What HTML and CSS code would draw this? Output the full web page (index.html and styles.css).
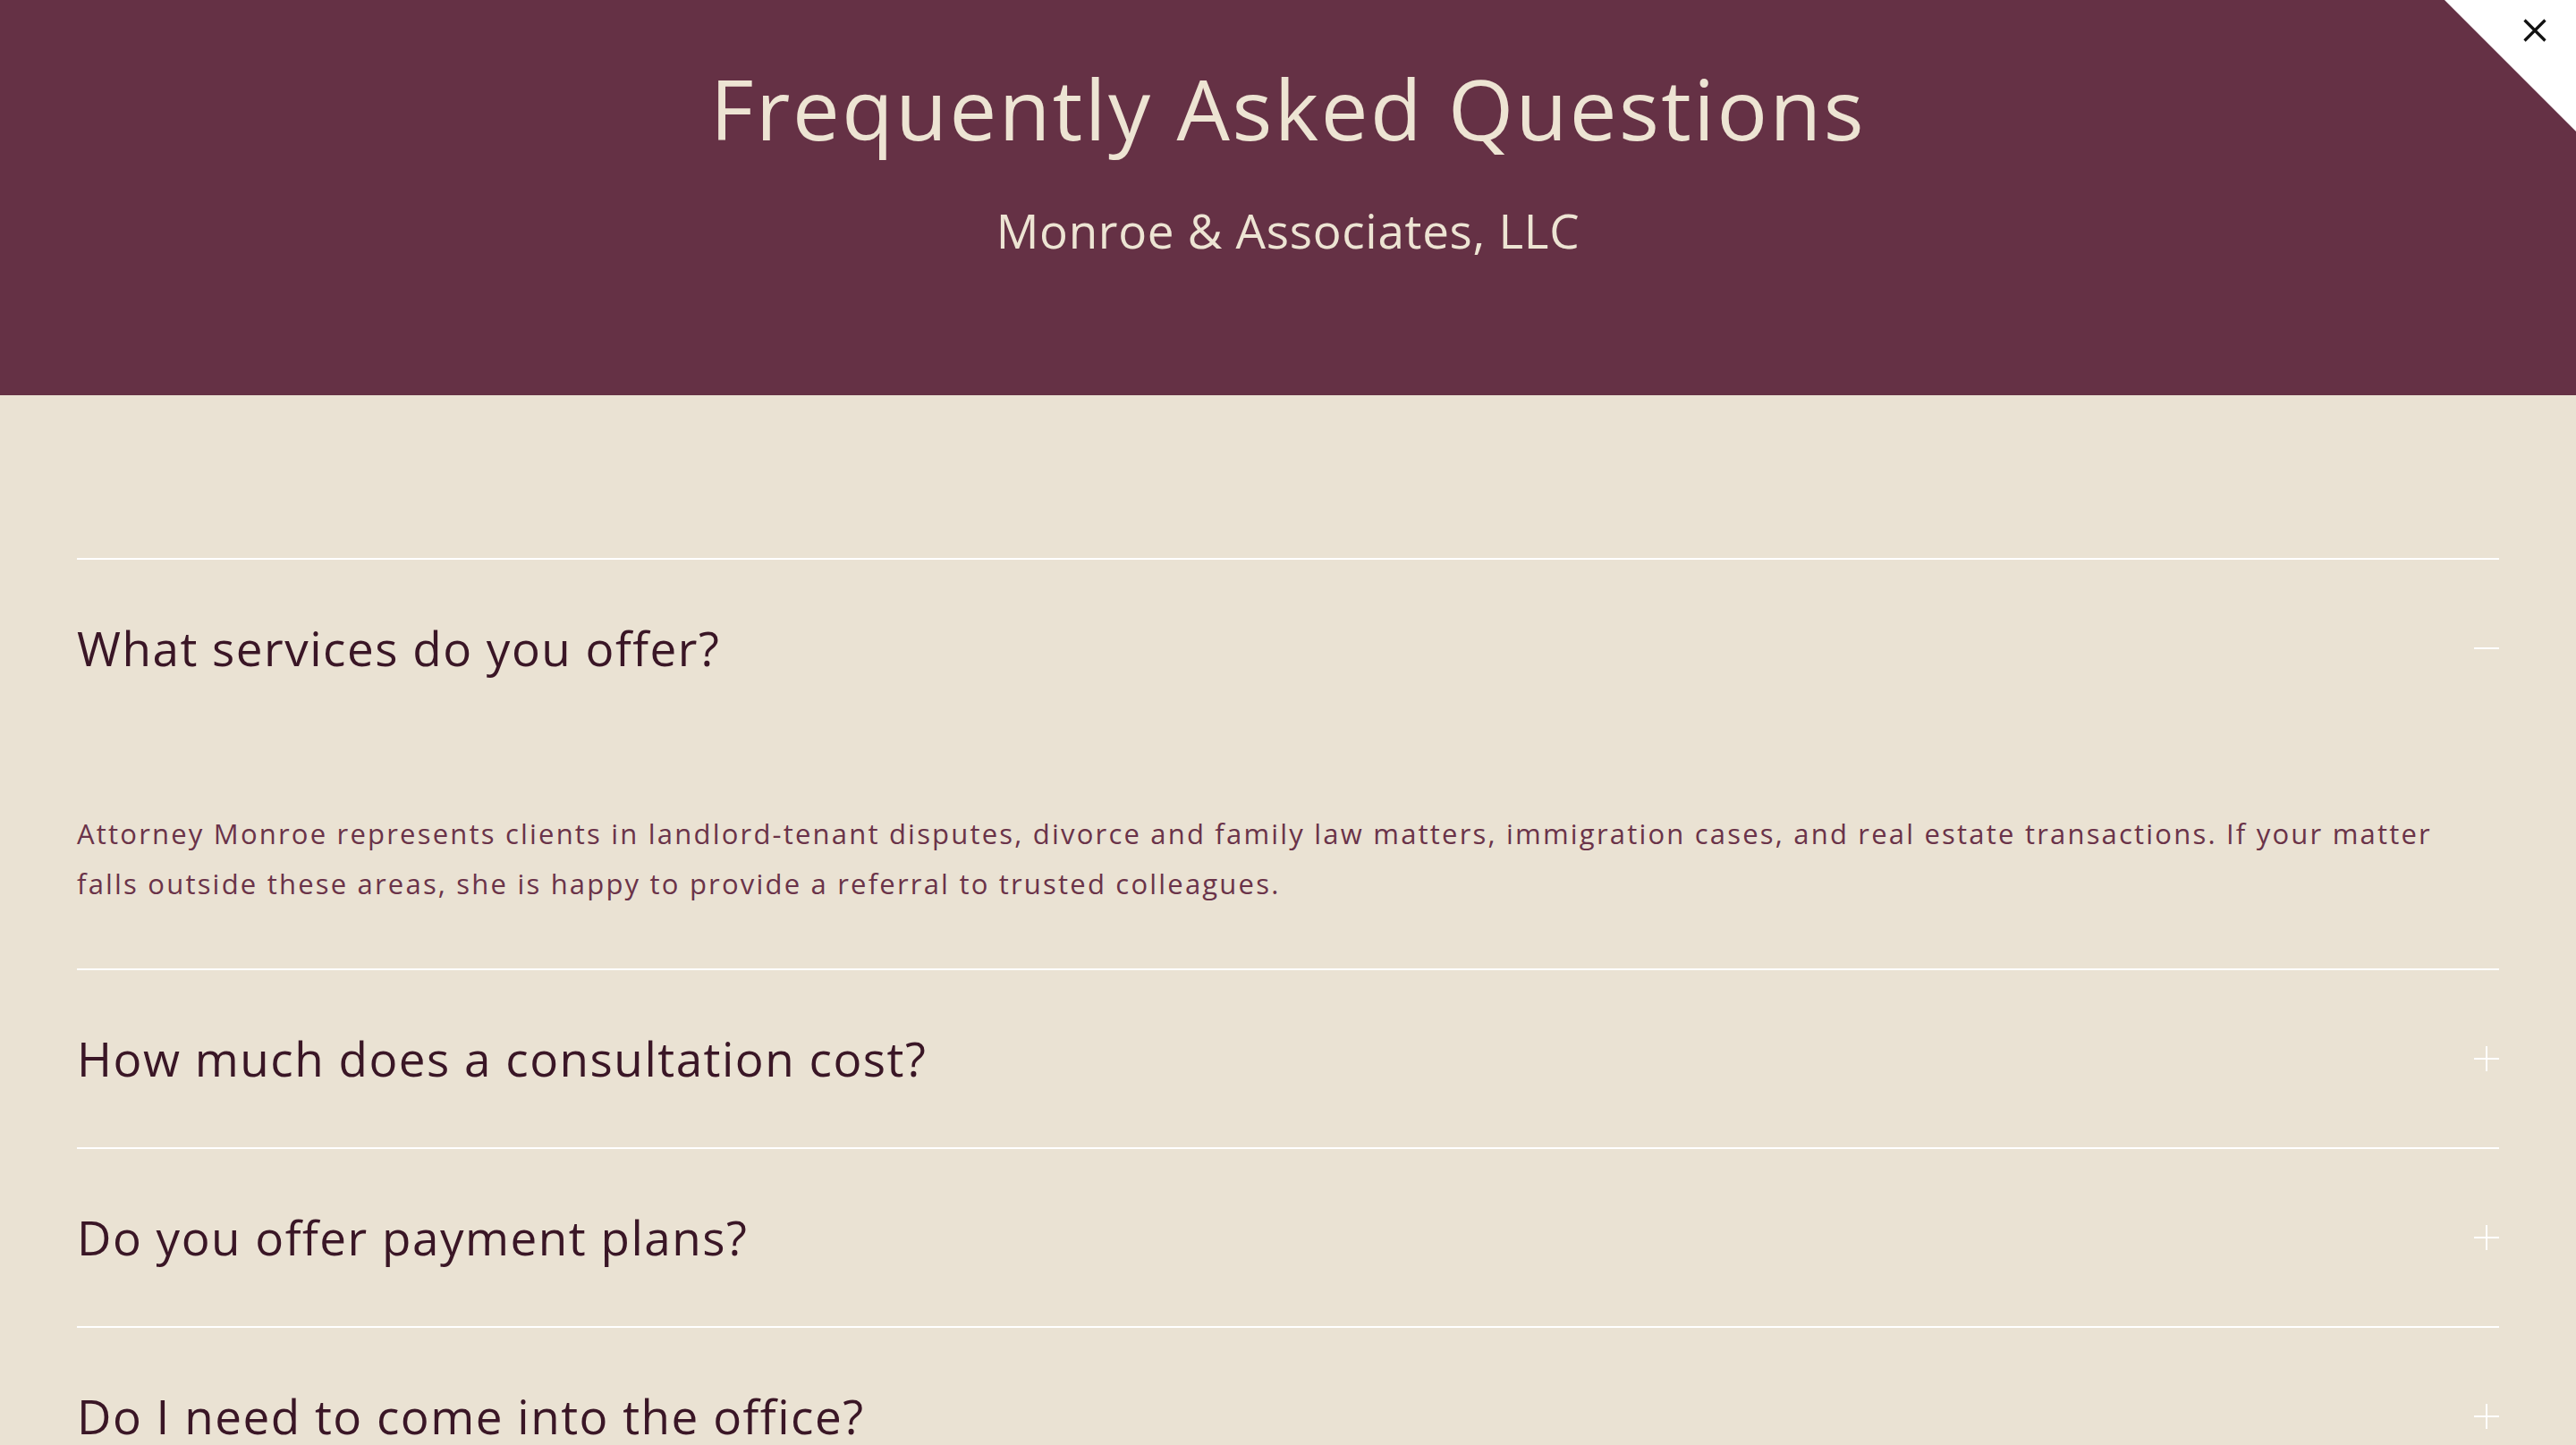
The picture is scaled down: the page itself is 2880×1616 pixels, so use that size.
FILE: index.html
```html
<!DOCTYPE html>
<html lang="en">
<head>
<meta charset="utf-8">
<title>Frequently Asked Questions — Monroe &amp; Associates, LLC</title>
<link rel="stylesheet" href="styles.css">
</head>
<body>
<header class="hero">
  <h1 class="hero-title">Frequently Asked Questions</h1>
  <p class="hero-sub">Monroe &amp; Associates, LLC</p>
</header>
<button class="close" aria-label="Close">
  <svg class="close-x" viewBox="0 0 26 26" width="26" height="26" aria-hidden="true">
    <path d="M1.5 1.5 L24.5 24.5 M24.5 1.5 L1.5 24.5" stroke="#111" stroke-width="3.2" fill="none"/>
  </svg>
</button>
<main class="faq">
  <section class="faq-item open">
    <div class="faq-q">
      <h2 class="faq-title">What services do you offer?</h2>
      <span class="toggle minus"></span>
    </div>
    <div class="faq-a">
      <p>Attorney Monroe represents clients in landlord-tenant disputes, divorce and family law matters, immigration cases, and real estate transactions. If your matter falls outside these areas, she is happy to provide a referral to trusted colleagues.</p>
    </div>
  </section>
  <section class="faq-item">
    <div class="faq-q">
      <h2 class="faq-title">How much does a consultation cost?</h2>
      <span class="toggle plus"></span>
    </div>
  </section>
  <section class="faq-item">
    <div class="faq-q">
      <h2 class="faq-title">Do you offer payment plans?</h2>
      <span class="toggle plus"></span>
    </div>
  </section>
  <section class="faq-item">
    <div class="faq-q">
      <h2 class="faq-title">Do I need to come into the office?</h2>
      <span class="toggle plus"></span>
    </div>
  </section>
</main>
</body>
</html>
```
FILE: styles.css
```css
* { box-sizing: border-box; }
html, body {
  margin: 0;
  padding: 0;
}
body {
  background: #eae2d3;
  font-family: "Open Sans", "Noto Sans", sans-serif;
  height: 1616px;
  overflow: hidden;
  position: relative;
}
.hero {
  background: #653145;
  height: 442px;
  padding-top: 74px;
  text-align: center;
  color: #ede4d3;
}
.hero-title {
  margin: 0;
  font-size: 94px;
  line-height: 94px;
  font-weight: 400;
  letter-spacing: 2.5px;
}
.hero-sub {
  margin: 63px 0 0;
  font-size: 53px;
  line-height: 54px;
  font-weight: 400;
  letter-spacing: 0.7px;
}
.close {
  position: absolute;
  top: 0;
  right: 0;
  width: 147px;
  height: 147px;
  border: 0;
  padding: 0;
  background: #ffffff;
  clip-path: polygon(0 0, 100% 0, 100% 100%);
  cursor: pointer;
}
.close-x {
  position: absolute;
  top: 21px;
  right: 33px;
  display: block;
}
.faq {
  padding: 182px 86px 0;
}
.faq-item {
  border-top: 2px solid #ffffff;
}
.faq-q {
  height: 198px;
  display: flex;
  align-items: center;
  justify-content: space-between;
}
.faq-title {
  margin: 0;
  font-size: 53px;
  line-height: 1.2;
  font-weight: 400;
  color: #3a1626;
  letter-spacing: 1.5px;
}
.toggle {
  position: relative;
  width: 28px;
  height: 28px;
  flex: none;
}
.toggle::before,
.toggle::after {
  content: "";
  position: absolute;
  background: #ffffff;
}
.toggle::before {
  left: 0;
  right: 0;
  top: 13px;
  height: 2px;
}
.plus::after {
  top: 0;
  bottom: 0;
  left: 13px;
  width: 2px;
}
.faq-a {
  padding: 80px 0 67px;
}
.faq-a p {
  margin: 0;
  font-size: 31px;
  line-height: 56px;
  color: #6a3349;
  letter-spacing: 2.2px;
}
```
